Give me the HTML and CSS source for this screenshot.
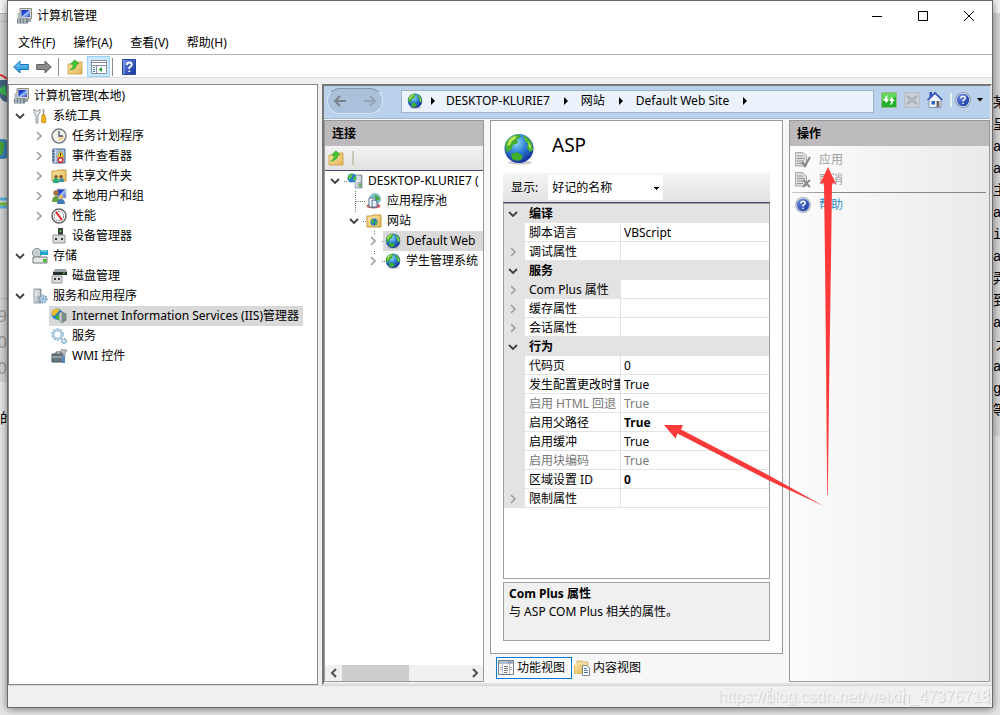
FILE: index.html
```html
<!DOCTYPE html>
<html lang="zh-CN">
<head>
<meta charset="utf-8">
<title>计算机管理</title>
<link rel="stylesheet" href="styles.css">
</head>
<body>
<svg class="defs" aria-hidden="true">
  <defs>
    <radialGradient id="sea" cx="40%" cy="30%" r="70%"><stop offset="0" stop-color="#8fdcf8"/><stop offset=".5" stop-color="#2f7fd6"/><stop offset="1" stop-color="#15309a"/></radialGradient>
    <linearGradient id="blue" x2="0" y2="1"><stop offset="0" stop-color="#7fd4fb"/><stop offset="1" stop-color="#1684d0"/></linearGradient>
    <linearGradient id="gold" x2="1" y2="1"><stop offset="0" stop-color="#fbe7a6"/><stop offset="1" stop-color="#e0b453"/></linearGradient>
    <linearGradient id="steel" x2="1" y2="0"><stop offset="0" stop-color="#e4e8ea"/><stop offset="1" stop-color="#8b979d"/></linearGradient>
    <linearGradient id="screen" x2="1" y2="1"><stop offset="0" stop-color="#1424a8"/><stop offset=".45" stop-color="#2d52da"/><stop offset=".5" stop-color="#a9c8ff"/><stop offset="1" stop-color="#2146c4"/></linearGradient>
    <linearGradient id="helpblue" x2="1" y2="1"><stop offset="0" stop-color="#6b8de4"/><stop offset="1" stop-color="#14349f"/></linearGradient>
  </defs>
  <symbol id="globe" viewBox="0 0 32 32">
    <ellipse cx="17" cy="29.500" rx="12" ry="2" fill="#999" opacity=".5"/>
    <circle cx="16" cy="15.500" r="14.500" fill="url(#sea)"/>
    <path d="M3 9Q8 2 15 1.500Q19 2 17 5L14 6L15 10L10 12L8 17L4 19Q1 15 3 9Z" fill="#45ad2e"/>
    <path d="M6 7Q9 3 14 3L12 6L9 8L7 12L4 13Z" fill="#bde85c"/>
    <path d="M20 2Q27 5 29 11L30 17L27 19L24 15L25 11L22 8Z" fill="#4cb830"/>
    <path d="M8 21L14 19L20 23L18 27Q13 29 9 26Z" fill="#3fae2c"/>
    <path d="M25 9L28 12L28 16L26 14Z" fill="#a5e050"/>
  </symbol>
  <symbol id="computer" viewBox="0 0 16 16">
    <path d="M4 .5H15.500V11H4Z" fill="#d5d4cb" stroke="#8f8f86"/><path d="M5.500 2H14V9H5.500Z" fill="url(#screen)"/>
    <path d="M1.500 5H5V10H1.500Z" fill="#b5bcc0"/><path d="M1 10.500H12V15.500H1Z" fill="#76848e"/><path d="M2 12H11M2 14H11" stroke="#dbe2e6" stroke-dasharray="2 1"/><path d="M12 11H15V14H12Z" fill="#9ba2a5"/>
  </symbol>
  <symbol id="tools" viewBox="0 0 16 16">
    <path d="M2 1V5L4 7V15H6V7L8 5V1L6 3H4Z" fill="#e6eaec" stroke="#77838a" stroke-width=".8"/><path d="M11.500 1V8" stroke="#8d949a" stroke-width="1.500"/><path d="M10 7H13L14 14Q12 16 9.500 14Z" fill="#f5b516" stroke="#b87a08" stroke-width=".7"/>
  </symbol>
  <symbol id="clock" viewBox="0 0 16 16"><circle cx="8" cy="8" r="7" fill="#f4f3e6" stroke="#777e86" stroke-width="1.500"/><path d="M8 8H13A5 5 0 0 1 8 13Z" fill="#f2d395"/><path d="M8 3V8H12" fill="none" stroke="#3f5470" stroke-width="1.300"/></symbol>
  <symbol id="events" viewBox="0 0 16 16"><path d="M2 1H14V15H2Z" fill="#a6bedb" stroke="#41628f"/><path d="M4 1V15" stroke="#eef"/><path d="M1 3H4M1 6H4M1 9H4M1 12H4" stroke="#2e4c79"/><path d="M9.500 3L13 9H6Z" fill="#ffdc28" stroke="#9a7b12" stroke-width=".6"/><path d="M9.500 5V8" stroke="#222"/><circle cx="9.500" cy="12" r="2.300" fill="#fff" stroke="#d52c25" stroke-width="1.600"/></symbol>
  <symbol id="share" viewBox="0 0 16 16"><path d="M1 3H6L7 2H15V13H1Z" fill="url(#gold)" stroke="#c4993f"/><circle cx="5" cy="8.500" r="1.600" fill="#764d31"/><circle cx="10" cy="8.500" r="1.600" fill="#764d31"/><path d="M2 15Q2 10 5 10Q8 10 8 15Z" fill="#26ad82"/><path d="M8 14Q8 10 10.500 10Q13 10 13 14Z" fill="#3c8fa6"/></symbol>
  <symbol id="users" viewBox="0 0 16 16"><path d="M6 1H15V10H6Z" fill="url(#screen)" stroke="#c6c8c8"/><circle cx="5" cy="5" r="2.700" fill="#a67347"/><circle cx="10" cy="9" r="2.300" fill="#dfb269"/><path d="M1 14Q1 8 5 8Q8 8 8 14Z" fill="#65a23d"/><path d="M6 16Q6 11 10 11Q14 11 14 16Z" fill="#4479b8"/></symbol>
  <symbol id="perf" viewBox="0 0 16 16"><circle cx="8" cy="8" r="7" fill="#fff" stroke="#686868" stroke-width="1.500"/><circle cx="8" cy="8" r="4.800" fill="none" stroke="#4e5459" stroke-width=".8" stroke-dasharray="2 1"/><path d="M5 4L11 12" stroke="#e02820" stroke-width="2"/></symbol>
  <symbol id="device" viewBox="0 0 16 16"><path d="M7 0H12V7H7Z" fill="#3a413d"/><circle cx="9.500" cy="3" r="1" fill="#5fe03e"/><path d="M2 7H14V15H2Z" fill="#d7dadc" stroke="#92989c"/><path d="M4 10H6V12H4ZM10 10H12V12H10Z" fill="#333"/></symbol>
  <symbol id="storage" viewBox="0 0 16 16"><circle cx="5" cy="5" r="4.500" fill="#cdd6d8" stroke="#7d898d"/><circle cx="5" cy="5" r="1.300" fill="#fff" stroke="#888" stroke-width=".5"/><path d="M8 2H16V7H8Z" fill="#27a2c6"/><path d="M9 3H15" stroke="#a4e9f5"/><path d="M1 9H15V15H1Z" fill="#e6e8e8" stroke="#73797b"/><path d="M11 11H14V14H11Z" fill="#35bf24"/></symbol>
  <symbol id="disk" viewBox="0 0 16 16"><path d="M4 1H15L16 4V7H2V4Z" fill="#9aa2a5"/><path d="M2 4H16V7H2Z" fill="#292e2c"/><path d="M12 5H14" stroke="#67e34f"/><path d="M1 8H11V15H1Z" fill="#d7dadc" stroke="#92989c"/><path d="M3 10H5V12H3ZM7 10H9V12H7Z" fill="#333"/></symbol>
  <symbol id="server" viewBox="0 0 16 16"><path d="M2 1H9V15H2Z" fill="url(#steel)" stroke="#7a8e97" stroke-width=".8"/><path d="M3 3H8M3 5H8M3 7H8" stroke="#f6f8f8"/><circle cx="11" cy="11" r="3.500" fill="#c9dfef" stroke="#6e9dc2" stroke-width="2" stroke-dasharray="1.600 1"/><circle cx="11" cy="11" r="1.200" fill="#fff" stroke="#7196b3"/></symbol>
  <symbol id="iis" viewBox="0 0 16 16"><circle cx="6" cy="6" r="5.500" fill="#237ccc"/><path d="M1 3Q5-1 9 2L6 5L3 8L1 7Z" fill="#efbd21"/><path d="M4 8L8 6L10 11L6 12Z" fill="#3bb043"/><path d="M8 5L11 3.500V15L8 12.500Z" fill="#c5cecc" stroke="#68766f" stroke-width=".6"/><path d="M11 3.500L15.500 5.500V12.500L11 15Z" fill="#7c8d88"/></symbol>
  <symbol id="gears" viewBox="0 0 16 16"><circle cx="6.500" cy="6.500" r="5" fill="none" stroke="#8eb9d7" stroke-width="2.600" stroke-dasharray="2 1.140"/><circle cx="6.500" cy="6.500" r="4" fill="none" stroke="#a9cbe2" stroke-width="2"/><circle cx="13" cy="13" r="2" fill="#fff" stroke="#81a9c7" stroke-width="2" stroke-dasharray="1.500 .6"/></symbol>
  <symbol id="wmi" viewBox="0 0 16 16"><path d="M5 6V4H10V6" fill="none" stroke="#555"/><path d="M1 6H12V14H1Z" fill="#65777f" stroke="#475861"/><path d="M1 9H12" stroke="#c4ced3"/><path d="M11 1L9 4L12 5V9H14V5L16 3L14 1V3Z" fill="#bbc4c9" stroke="#68757c" stroke-width=".6"/><path d="M11 8H14V15H11Z" fill="#5c8bc4"/></symbol>
  <symbol id="folderup" viewBox="0 0 16 16"><path d="M1 5H7L8 3H15V15H1Z" fill="url(#gold)" stroke="#c99c3d" stroke-width=".8"/><path d="M3 11Q7 9 6 5H3.500L8 .8L12 5H9.500Q10 10 3 11Z" fill="#43c734" stroke="#209a1b" stroke-width=".6"/></symbol>
  <symbol id="back" viewBox="0 0 16 16"><path d="M.7 8L7 2V5.500H15.300V10.500H7V14Z" fill="url(#blue)" stroke="#1476b8"/></symbol>
  <symbol id="forward" viewBox="0 0 16 16"><path d="M15.300 8L9 2V5.500H.7V10.500H9V14Z" fill="#8b8b8b" stroke="#5f5f5f"/></symbol>
  <symbol id="pane" viewBox="0 0 16 16"><path d="M.5 1.500H15.500V14.500H.5Z" fill="#fff" stroke="#8490a0"/><path d="M1 3.500H15M1 6.500H15M5.500 7V14" stroke="#8490a0"/><path d="M2 8.500H4M2 10.500H4M2 12.500H4" stroke="#317ac0"/><path d="M11 8V13L7.500 10.500Z" fill="#28a52c"/></symbol>
  <symbol id="help" viewBox="0 0 16 16"><circle cx="8" cy="8" r="7.700" fill="#7c889e"/><circle cx="8" cy="8" r="6.900" fill="#e7ecf4"/><circle cx="8" cy="8" r="6.200" fill="url(#helpblue)"/><path d="M5.800 6.500Q6 4.300 8 4.300Q10.200 4.300 10.200 6.200Q10.200 7.300 8.100 8.300V9.500M8.100 10.700V12" fill="none" stroke="#fff" stroke-width="1.500"/></symbol>
  <symbol id="helpbook" viewBox="0 0 14 16"><path d="M.5.5H13.500V15.500H.5Z" fill="url(#helpblue)" stroke="#2a489b"/><path d="M2 1V15" stroke="#8ba5df"/><path d="M4.800 6Q4.800 3.500 7.200 3.500Q9.800 3.500 9.800 5.700Q9.800 7 7.300 8.500V10M7.300 11.500V13" fill="none" stroke="#fff" stroke-width="1.800"/></symbol>
  <symbol id="pool" viewBox="0 0 16 16"><circle cx="9" cy="6" r="5.500" fill="#7fcad5" stroke="#448a9e" stroke-width=".5"/><path d="M8 2L12 3L14 6L11 8Z" fill="#48a43a"/><ellipse cx="7.500" cy="13" rx="7" ry="2.500" fill="#d95850"/><path d="M3 5H8L10 7V14H3Z" fill="#fff" stroke="#527298"/><path d="M6 7H9L11 9V14H6Z" fill="#e5edf8" stroke="#527298"/></symbol>
  <symbol id="site" viewBox="0 0 16 16"><path d="M1 3H6L7 2H15V14H1Z" fill="url(#gold)" stroke="#c4993f"/><circle cx="8" cy="9" r="3.500" fill="#2676cc"/><path d="M5 8L8 6V9L6 11ZM9 9L11 8V11L9 12Z" fill="#47ba3c"/></symbol>
  <symbol id="webserver" viewBox="0 0 16 16"><path d="M8 2H15V15H8Z" fill="url(#steel)" stroke="#7a8e97" stroke-width=".7"/><path d="M9 4H14M9 6H14M9 8H14" stroke="#fff"/><path d="M12 12H14" stroke="#42c03a" stroke-width="2"/><circle cx="5" cy="5" r="4.600" fill="#257ad2"/><path d="M1 4Q3 0 6 1L5 4L2 7ZM7 4L9 3V7L6 8Z" fill="#57c33c"/></symbol>
  <symbol id="refresh" viewBox="0 0 16 16"><path d="M.5.500H15.500V15.500H.5Z" fill="#23b12a" stroke="#97b990"/><path d="M1 1H15V5L1 9Z" fill="#60d75c"/><path d="M7 3Q4 4 4 7H2L5.500 11L8 7H6Q6 5 7 3ZM9 13Q12 12 12 9H14L10.500 5L8 9H10Q10 11 9 13Z" fill="#fff"/></symbol>
  <symbol id="stop" viewBox="0 0 16 16"><path d="M.5.500H15.500V15.500H.5Z" fill="#c9ced4" stroke="#b4bcc5"/><path d="M3 4L13 12M13 4L3 12" stroke="#8f979f" stroke-width="2"/><path d="M3 4L13 12M13 4L3 12" stroke="#dadde0" stroke-width=".7"/></symbol>
  <symbol id="home" viewBox="0 0 16 16"><path d="M2.500 0H5V5H2.500Z" fill="#3653bd"/><path d="M2 8L8 2L14 8V15.500H2Z" fill="#f0f2f7" stroke="#74839e" stroke-width=".8"/><path d="M.5 8L8 .8L15.500 8" fill="none" stroke="#3152bc" stroke-width="1.500"/><path d="M4.500 9H8V12.500H4.500Z" fill="#2c66b0"/><path d="M9.500 9H12.500V15H9.500Z" fill="#716a63"/></symbol>
  <symbol id="apply" viewBox="0 0 16 16"><path d="M.5.500H8L11.500 4V14H.5Z" fill="#ddd" stroke="#aaa"/><path d="M2 4H8M2 6.500H10M2 9H9M2 11.500H8" stroke="#999"/><path d="M7 10L10 14L15 5" fill="none" stroke="#8b8b8b" stroke-width="2.200"/></symbol>
  <symbol id="cancel" viewBox="0 0 16 16"><path d="M.5.500H8L11.500 4V14H.5Z" fill="#ddd" stroke="#aaa"/><path d="M2 4H8M2 6.500H10M2 9H9M2 11.500H8" stroke="#999"/><path d="M8 8L15 15M15 8L8 15" stroke="#8b8b8b" stroke-width="1.800"/></symbol>
  <symbol id="features" viewBox="0 0 16 16"><path d="M.5.500H15.500V14.500H.5Z" fill="#fff" stroke="#737d8c"/><path d="M1 2.500H15" stroke="#b3bccd" stroke-width="3"/><path d="M10 2.500H14" stroke="#345b91" stroke-dasharray="1 1"/><path d="M4.500 4V14M11.500 4V14" stroke="#b8bfc9"/><path d="M6 6.500H10M6 8.500H10M6 10.500H10M6 12.500H9" stroke="#777"/><path d="M2 7.500H4M2 9.500H4M12 7.500H14M12 9.500H14" stroke="#aaa"/></symbol>
  <symbol id="content" viewBox="0 0 16 16"><path d="M3 1H8L9 2H14V12H3Z" fill="#f5df9d" stroke="#c9a14a" stroke-width=".7"/><path d="M0 5H5L3 14H0Z" fill="#e5b95a"/><path d="M1 4H10V14H1Z" fill="url(#gold)"/><path d="M8.500 5.500H13L15.500 8V15.500H8.500Z" fill="#fff" stroke="#7c8796"/><path d="M10 8.500H13M10 10.500H14M10 12.500H14" stroke="#427bc0"/></symbol>
  <symbol id="open" viewBox="0 0 16 16"><path d="M4 6L8 10L12 6" fill="none" stroke="#404040" stroke-width="1.800"/></symbol>
  <symbol id="closed" viewBox="0 0 16 16"><path d="M6 4L10 8L6 12" fill="none" stroke="#a0a0a0" stroke-width="1.600"/></symbol>
  <symbol id="tri" viewBox="0 0 6 8"><path d="M1 0L5 4L1 8Z" fill="#000"/></symbol>
</svg>

<div class="behind behind-left" aria-hidden="true">
  <svg class="fragments" width="8" height="300" viewBox="0 0 8 300">
    <rect width="8" height="13" fill="#f8f8f8"/><path d="M0 13.500H8M0 21.500H8M0 298.500H8" stroke="#bbb"/><path d="M0 75Q4 75 8 79" fill="none" stroke="#dc3838" stroke-width="2"/>
    <path d="M0 80H8V102Q3 102 0 95Z" fill="#466481"/><path d="M0 89L6 85L8 96L2 94Z" fill="#3dae53"/>
    <circle cx="3" cy="149" r="10" fill="#3a7eb5"/><path d="M0 141L6 143L4 153L0 157Z" fill="#45a43b"/><path d="M0 199H8M0 207H8" stroke="#5ab2dd" stroke-width="3"/><path d="M0 204H8" stroke="#70c13c" stroke-width="3"/>
  </svg>
  <span class="bg-note">29</span><span class="bg-note">0</span><span class="bg-note">70</span><span class="bg-word">的</span>
</div>

<main class="window">
  <header class="titlebar">
    <svg class="icon"><use href="#computer"/></svg><h1>计算机管理</h1>
    <div class="controls">
      <button aria-label="最小化"><svg width="12" height="12"><path d="M1 6.500H11" stroke="#000"/></svg></button>
      <button aria-label="最大化"><svg width="12" height="12"><path d="M1.500 1.500H10.500V10.500H1.500Z" stroke="#000" fill="none"/></svg></button>
      <button aria-label="关闭"><svg width="12" height="12"><path d="M1 1L11 11M11 1L1 11" stroke="#000"/></svg></button>
    </div>
  </header>
  <nav class="menubar"><button>文件(F)</button><button>操作(A)</button><button>查看(V)</button><button>帮助(H)</button></nav>
  <div class="toolbar">
    <button aria-label="后退"><svg class="icon"><use href="#back"/></svg></button>
    <button aria-label="前进"><svg class="icon"><use href="#forward"/></svg></button>
    <span class="sep"></span>
    <button aria-label="向上一级"><svg class="icon"><use href="#folderup"/></svg></button>
    <button class="pressed" aria-label="显示控制台树" aria-pressed="true"><svg class="icon"><use href="#pane"/></svg></button>
    <span class="sep"></span>
    <button aria-label="帮助"><svg class="icon"><use href="#helpbook"/></svg></button>
  </div>

  <div class="workspace">
    <aside class="console">
      <ul class="tree" role="tree" aria-label="控制台树">
        <li class="root"><span class="item"><svg class="icon"><use href="#computer"/></svg>计算机管理(本地)</span></li>
        <li><div class="row"><svg class="icon"><use href="#open"/></svg><span class="item"><svg class="icon"><use href="#tools"/></svg>系统工具</span></div>
          <ul>
            <li class="row"><svg class="icon"><use href="#closed"/></svg><span class="item"><svg class="icon"><use href="#clock"/></svg>任务计划程序</span></li>
            <li class="row"><svg class="icon"><use href="#closed"/></svg><span class="item"><svg class="icon"><use href="#events"/></svg>事件查看器</span></li>
            <li class="row"><svg class="icon"><use href="#closed"/></svg><span class="item"><svg class="icon"><use href="#share"/></svg>共享文件夹</span></li>
            <li class="row"><svg class="icon"><use href="#closed"/></svg><span class="item"><svg class="icon"><use href="#users"/></svg>本地用户和组</span></li>
            <li class="row"><svg class="icon"><use href="#closed"/></svg><span class="item"><svg class="icon"><use href="#perf"/></svg>性能</span></li>
            <li class="row"><svg class="icon"></svg><span class="item"><svg class="icon"><use href="#device"/></svg>设备管理器</span></li>
          </ul></li>
        <li><div class="row"><svg class="icon"><use href="#open"/></svg><span class="item"><svg class="icon"><use href="#storage"/></svg>存储</span></div>
          <ul><li class="row"><svg class="icon"></svg><span class="item"><svg class="icon"><use href="#disk"/></svg>磁盘管理</span></li></ul></li>
        <li><div class="row"><svg class="icon"><use href="#open"/></svg><span class="item"><svg class="icon"><use href="#server"/></svg>服务和应用程序</span></div>
          <ul>
            <li class="row"><svg class="icon"></svg><span class="item selected"><svg class="icon"><use href="#iis"/></svg>Internet Information Services (IIS)管理器</span></li>
            <li class="row"><svg class="icon"></svg><span class="item"><svg class="icon"><use href="#gears"/></svg>服务</span></li>
            <li class="row"><svg class="icon"></svg><span class="item"><svg class="icon"><use href="#wmi"/></svg>WMI 控件</span></li>
          </ul></li>
      </ul>
    </aside>

    <section class="iis">
      <div class="navbar">
        <div class="history">
          <button aria-label="后退"><svg width="14" height="12"><path d="M13 6H2M7 1L2 6L7 11" fill="none" stroke="#7b8288" stroke-width="2"/></svg></button>
          <button aria-label="前进"><svg width="14" height="12"><path d="M1 6H12M7 1L12 6L7 11" fill="none" stroke="#93a5b6" stroke-width="2"/></svg></button>
        </div>
        <div class="address">
          <svg class="icon"><use href="#globe"/></svg>
          <svg class="tri"><use href="#tri"/></svg><a href="#">DESKTOP-KLURIE7</a>
          <svg class="tri"><use href="#tri"/></svg><a href="#">网站</a>
          <svg class="tri"><use href="#tri"/></svg><a href="#">Default Web Site</a>
          <svg class="tri"><use href="#tri"/></svg>
        </div>
        <div class="navtools">
          <button aria-label="刷新"><svg class="icon"><use href="#refresh"/></svg></button>
          <button aria-label="停止" disabled><svg class="icon"><use href="#stop"/></svg></button>
          <button aria-label="主页"><svg class="icon"><use href="#home"/></svg></button>
          <span class="navsep"></span>
          <button class="helpdrop" aria-label="帮助"><svg class="icon"><use href="#help"/></svg><svg width="6" height="4"><path d="M0 0H6L3 3.500Z"/></svg></button>
        </div>
      </div>

      <div class="panes">
        <section class="pane connections">
          <h2>连接</h2>
          <div class="panetools"><button aria-label="连接"><svg class="icon"><use href="#folderup"/></svg></button><span></span></div>
          <div class="treewrap">
            <svg class="guides" width="80" height="100" aria-hidden="true"><path d="M19 10.500H23M30.500 20V42M31 30.500H40M38 50.500H42M49.500 60V64M49.500 80V84M57 70.500H60M57 90.500H60" fill="none" stroke="#777" stroke-dasharray="1 1"/></svg>
            <ul class="tree" role="tree" aria-label="连接">
              <li><div class="row"><svg class="icon"><use href="#open"/></svg><span class="item"><svg class="icon"><use href="#webserver"/></svg>DESKTOP-KLURIE7 (</span></div>
                <ul>
                  <li class="row"><svg class="icon"></svg><span class="item"><svg class="icon"><use href="#pool"/></svg>应用程序池</span></li>
                  <li><div class="row"><svg class="icon"><use href="#open"/></svg><span class="item"><svg class="icon"><use href="#site"/></svg>网站</span></div>
                    <ul>
                      <li class="row"><svg class="icon"><use href="#closed"/></svg><span class="item selected fill"><svg class="icon"><use href="#globe"/></svg>Default Web</span></li>
                      <li class="row"><svg class="icon"><use href="#closed"/></svg><span class="item"><svg class="icon"><use href="#globe"/></svg>学生管理系统</span></li>
                    </ul></li>
                </ul></li>
            </ul>
          </div>
          <div class="hscroll">
            <button aria-label="向左滚动"><svg width="8" height="10"><path d="M6 1L2 5L6 9" fill="none" stroke="#505050" stroke-width="2"/></svg></button>
            <div class="track"><div class="thumb"></div></div>
            <button aria-label="向右滚动"><svg width="8" height="10"><path d="M2 1L6 5L2 9" fill="none" stroke="#505050" stroke-width="2"/></svg></button>
          </div>
        </section>

        <section class="center">
          <div class="feature">
            <div class="heading"><svg class="bigicon"><use href="#globe"/></svg><h2>ASP</h2></div>
            <div class="display"><label for="names">显示:</label><select id="names"><option>好记的名称</option></select></div>
            <div class="gridbox">
              <table class="props">
                <colgroup><col class="c-gutter"><col class="c-key"><col></colgroup>
                <tr class="group"><td><svg class="icon"><use href="#open"/></svg></td><th colspan="2">编译</th></tr>
                <tr><td></td><td>脚本语言</td><td>VBScript</td></tr>
                <tr><td><svg class="icon"><use href="#closed"/></svg></td><td>调试属性</td><td></td></tr>
                <tr class="group"><td><svg class="icon"><use href="#open"/></svg></td><th colspan="2">服务</th></tr>
                <tr class="current"><td><svg class="icon"><use href="#closed"/></svg></td><td>Com Plus 属性</td><td></td></tr>
                <tr><td><svg class="icon"><use href="#closed"/></svg></td><td>缓存属性</td><td></td></tr>
                <tr><td><svg class="icon"><use href="#closed"/></svg></td><td>会话属性</td><td></td></tr>
                <tr class="group"><td><svg class="icon"><use href="#open"/></svg></td><th colspan="2">行为</th></tr>
                <tr><td></td><td>代码页</td><td>0</td></tr>
                <tr><td></td><td>发生配置更改时重</td><td>True</td></tr>
                <tr class="dim"><td></td><td>启用 HTML 回退</td><td>True</td></tr>
                <tr class="changed"><td></td><td>启用父路径</td><td>True</td></tr>
                <tr><td></td><td>启用缓冲</td><td>True</td></tr>
                <tr class="dim"><td></td><td>启用块编码</td><td>True</td></tr>
                <tr class="changed"><td></td><td>区域设置 ID</td><td>0</td></tr>
                <tr><td><svg class="icon"><use href="#closed"/></svg></td><td>限制属性</td><td></td></tr>
              </table>
            </div>
            <div class="hint"><h3>Com Plus 属性</h3><p>与 ASP COM Plus 相关的属性。</p></div>
          </div>
          <div class="views">
            <button class="on"><svg class="icon"><use href="#features"/></svg>功能视图</button>
            <button><svg class="icon"><use href="#content"/></svg>内容视图</button>
          </div>
        </section>

        <section class="pane actions">
          <h2>操作</h2>
          <div class="actionlist">
            <button disabled><svg class="icon"><use href="#apply"/></svg>应用</button>
            <button disabled><svg class="icon"><use href="#cancel"/></svg>取消</button>
            <hr>
            <a href="#"><svg class="icon"><use href="#help"/></svg>帮助</a>
          </div>
        </section>
      </div>
    </section>
  </div>
  <footer class="statusbar"><span></span><span></span><span></span></footer>
</main>

<div class="behind behind-right" aria-hidden="true">
  <p>某<br>呈<br>a<br>a<br>主<br>a<br>in<br>a<br>弄<br>到<br>a<br>&thinsp;大<br>a<br>g<br>等</p>
</div>

<svg class="arrows" width="1000" height="715" aria-hidden="true">
  <path d="M828 167L836 184L832 183L831 260L829.500 360L827.800 495H827.200L826 360L825 260L824 183L820 184Z" fill="#fc3a3a"/>
  <path d="M664 425L683 425L681 429.500L770 476L823.500 506L770 481L677.500 433.500L675.500 438.500Z" fill="#fc3a3a"/>
</svg>
<div class="watermark">https://blog.csdn.net/weixin_47376718</div>
</body>
</html>
```
FILE: styles.css
```css
* { box-sizing: border-box; }

body {
  margin: 0;
  height: 100vh;
  padding-bottom: 7px;
  display: grid;
  grid-template-columns: 7px minmax(0, 1fr) 7px;
  grid-template-rows: minmax(0, 1fr);
  overflow: hidden;
  position: relative;
  background: #e7e7e7;
  color: #000;
  font: 12px/20px "Noto Sans", "Noto Sans CJK SC", sans-serif;
}

h1, h2, h3, p, ul { margin: 0; padding: 0; font-size: 12px; font-weight: 400; }
ul { list-style: none; }
button { padding: 0; border: 0; background: none; color: inherit; font: inherit; display: flex; align-items: center; justify-content: center; }
a { color: inherit; text-decoration: none; }
svg { display: block; flex: none; }
.defs { position: absolute; width: 0; height: 0; }
.icon { width: 16px; height: 16px; }

/* content peeking out from behind the window */
.behind { overflow: hidden; white-space: nowrap; background: linear-gradient(#d4d4d4 382px, #e7e7e7 382px); }
.behind-left { display: flex; flex-direction: column; align-items: flex-end; }
.bg-note { color: #999; font-size: 16px; line-height: 26px; }
.bg-note:first-of-type { padding-top: 3px; }
.bg-word { align-self: flex-start; font-size: 14px; padding-top: 27px; }
.behind-right { background: linear-gradient(#f5f5f5 13px, #d6d6d6 13px 436px, #e7e7e7 436px); }
.behind-right p { padding-top: 92px; font: 14px/22px "Liberation Mono", "Noto Sans CJK SC", monospace; }

/* window chrome */
.window {
  position: relative;
  display: flex;
  flex-direction: column;
  min-width: 0;
  border: 1px solid #6b6b6b;
  background: #f0f0f0;
  box-shadow: 0 1px 8px rgba(0, 0, 0, .5);
}
.titlebar { display: flex; align-items: center; height: 29px; padding-left: 8px; gap: 5px; background: #fff; }
.controls { display: flex; margin-left: auto; }
.controls button { width: 46px; height: 29px; }
.menubar { display: flex; gap: 18px; height: 25px; padding: 2px 0 0 10px; background: #fff; border-bottom: 1px solid #b4b4b4; }
.toolbar { display: flex; align-items: center; height: 23px; padding: 1px 0 0 5px; background: #fff; border-bottom: 1px solid #dcdcdc; }
.toolbar button + button { margin-left: 7px; }
.toolbar .pressed { width: 23px; height: 21px; background: #cce8ff; border: 1px solid #99d1ff; }
.toolbar button.pressed { margin-left: 4px; }
.sep { width: 1px; height: 18px; margin: 0 8px 0 6px; background: #8c8c8c; }
.pressed + .sep { margin-left: 2px; }
.statusbar { display: grid; grid-template-columns: 1fr 133px 85px; height: 22px; padding: 2px; border-top: 1px solid #d7d7d7; }
.statusbar span { border-right: 1px solid #d7d7d7; }

.workspace { flex: 1; min-height: 0; display: grid; grid-template-columns: 310px minmax(0, 1fr); gap: 4px; padding-top: 6px; }
.console { padding: 1px 3px; background: #fff; border: 1px solid #828790; overflow: hidden; }

/* trees */
.tree { white-space: nowrap; }
.tree ul { padding-left: 19px; }
.row { display: flex; align-items: center; gap: 2px; }
.item { display: flex; align-items: center; gap: 5px; height: 20px; padding: 0 4px 0 2px; }
.root .item { padding-left: 1px; }
.selected { background: #d9d9d9; }
.fill { flex: 1; }

/* IIS manager */
.iis { display: flex; flex-direction: column; min-width: 0; border: 2px solid #e3e3e3; border-top-color: #777; border-left-color: #777; background: #f7f7f7; }
.navbar { display: flex; align-items: center; height: 33px; padding: 0 7px 2px 3px; background: #b9d1ea; border-bottom: 1px solid #9fb9d6; }
.history { display: flex; justify-content: space-between; width: 56px; height: 26px; padding: 0 5px; border-radius: 13px; background: #a9c1da; border: 1px solid #d7e5f3; border-top-color: #8297ad; }
.address { flex: 1; display: flex; align-items: center; gap: 12px; height: 23px; margin-left: 18px; padding-left: 5px; background: #eaf2fb; border: 1px solid #a0b4c8; }
.address .icon + .tri { margin: 0 -2px 0 -5px; }
.address a + .tri { margin-left: 1px; }
.tri { width: 6px; height: 8px; }
.navtools { display: flex; align-items: center; gap: 7px; padding: 0 0 2px 7px; }
.navsep { width: 2px; height: 14px; background: #e6eef6; }
.navsep + button { margin-left: -4px; }
.helpdrop { gap: 6px; }

.panes { flex: 1; min-height: 0; display: grid; grid-template-columns: 160px minmax(0, 1fr) 201px; gap: 6px; padding: 1px 0; }
.pane { display: flex; flex-direction: column; min-width: 0; border: 1px solid #999; background: #fff; }
.pane h2 { height: 25px; padding-left: 7px; line-height: 25px; font-weight: 700; background: #bcbabc; }

.panetools { display: flex; align-items: center; gap: 8px; height: 25px; padding-left: 3px; background: linear-gradient(#f4f3f4, #e2e1e2); border-bottom: 1px solid #48486e; }
.panetools span { width: 2px; height: 14px; background: #c8c8b8; }
.treewrap { position: relative; flex: 1; padding-left: 2px; overflow: hidden; }
.guides { position: absolute; left: 0; top: 0; }
.treewrap .tree { position: relative; }
.hscroll { display: flex; height: 16px; background: #f0f0f0; }
.hscroll button { width: 17px; }
.track { flex: 1; }
.thumb { width: 54%; height: 16px; background: #cdcdcd; }

.center { display: flex; flex-direction: column; min-width: 0; }
.feature { flex: 1; min-height: 0; display: flex; flex-direction: column; padding: 12px; border: 1px solid #999; background: #fff; }
.heading { display: flex; align-items: flex-start; gap: 17px; height: 40px; }
.heading h2 { font-size: 19px; line-height: 24px; }
.bigicon { width: 32px; height: 32px; }
.display { display: flex; align-items: center; height: 30px; padding-left: 8px; gap: 10px; background: linear-gradient(#f6f5f6, #e2e1e2); border-bottom: 1px solid #48486e; }
.display select {
  appearance: none; width: 115px; height: 25px; padding: 0 4px; border: 0; border-radius: 0;
  font: inherit; color: #000;
  background: linear-gradient(#000, #000) 106px 12px / 5px 1px no-repeat, linear-gradient(#000, #000) 107px 13px / 3px 1px no-repeat, linear-gradient(#000, #000) 108px 14px / 1px 1px no-repeat, #fff;
}
.gridbox { flex: 1; min-height: 0; overflow: hidden; border: 1px solid #a0a0a0; }
.props { width: 100%; table-layout: fixed; border-collapse: separate; border-spacing: 0; }
.c-gutter { width: 21px; }
.c-key { width: 96px; }
.props td, .props th { height: 19px; padding: 1px 0 0 4px; line-height: 17px; text-align: left; white-space: nowrap; overflow: hidden; border-bottom: 1px solid #e3e3e3; }
.props td:first-child { padding: 1px 0 0 1px; background: #e3e3e3; }
.props td:nth-child(2) { border-right: 1px solid #e3e3e3; }
.props td:nth-child(3) { padding-left: 3px; }
.group th, .current td:nth-child(2) { background: #e3e3e3; }
.dim { color: #777; }
.changed td:last-child { font-weight: 700; }
.hint { height: 59px; margin-top: 3px; padding: 2px 5px; background: #f0f0f0; border: 1px solid #a0a0a0; line-height: 18px; }
.hint h3 { font-weight: 700; }
.views { display: flex; height: 28px; padding: 3px 0 3px 6px; }
.views button { gap: 3px; padding: 0 6px 0 1px; border: 1px solid transparent; }
.views .on { border-color: #0078d7; background: #fff; }

.actions { background: linear-gradient(90deg, #fcfcfc, #eaeaea); }
.actionlist { display: flex; flex-direction: column; padding: 4px 3px 0 2px; }
.actionlist button, .actionlist a { display: flex; align-items: center; justify-content: flex-start; gap: 8px; height: 20px; padding-left: 3px; }
.actionlist button { color: #a0a0a0; }
.actionlist a { color: #2e8ecb; }
.actionlist hr { width: 100%; height: 1px; margin: 2px 0; border: 0; background: linear-gradient(90deg, #ccc, #888 20%); }

/* annotations drawn over the window */
.arrows { position: absolute; left: 0; top: 0; pointer-events: none; }
.watermark { position: absolute; right: 10px; bottom: 8px; color: #f4f4f4; font: 16px/20px "Liberation Sans", sans-serif; text-shadow: 1px 1px 1px #ccc; }
```
